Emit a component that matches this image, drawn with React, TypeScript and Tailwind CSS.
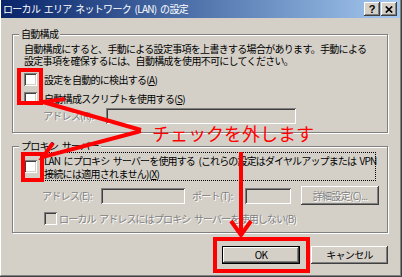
import React from "react";

const raised =
  "shadow-[inset_-1px_-1px_0_#404040,inset_1px_1px_0_#ffffff,inset_-2px_-2px_0_#808080]";
const sunken =
  "shadow-[inset_1px_1px_0_#808080,inset_-1px_-1px_0_#ffffff,inset_2px_2px_0_#404040,inset_-2px_-2px_0_#d4d0c8]";
const dis = "text-[#808080] [text-shadow:1px_1px_0_#ffffff]";

function Check({ disabled = false }: { disabled?: boolean }) {
  return (
    <div
      className={`h-[13px] w-[13px] shrink-0 ${sunken} ${disabled ? "bg-[#d4d0c8]" : "bg-white"}`}
    />
  );
}

function Group({
  label,
  className,
  children,
}: {
  label: string;
  className: string;
  children: React.ReactNode;
}) {
  return (
    <div
      className={`relative flex flex-col border border-[#808080] shadow-[inset_1px_1px_0_#ffffff,1px_1px_0_#ffffff] ${className}`}
    >
      <span className="absolute left-[6px] top-[-7px] bg-[#d4d0c8] px-[2px] leading-[12px] whitespace-nowrap">
        {label}
      </span>
      {children}
    </div>
  );
}

function TitleBtn({ children }: { children: React.ReactNode }) {
  return (
    <div
      className={`flex h-[14px] w-[16px] items-center justify-center bg-[#d4d0c8] ${raised}`}
    >
      {children}
    </div>
  );
}

export default function App() {
  return (
    <div className="relative h-[277px] w-[402px] overflow-hidden bg-[#d4d0c8] font-['Noto_Sans_CJK_JP',sans-serif] text-[10px] leading-[12px] tracking-[-0.7px] [word-spacing:2px] text-black">
      <div className="flex h-full flex-col border-r border-b border-r-[#404040] border-b-[#404040]">
        <div className="flex flex-1 flex-col border-l border-r border-b border-l-white border-r-[#808080] border-b-[#808080]">
          {/* Title bar */}
          <div className="flex h-[18px] shrink-0 items-center bg-linear-to-r from-[#0a246a] to-[#a6caf0] pl-[2px] pr-[3px]">
            <span className="flex-1 whitespace-nowrap text-white">
              ローカル エリア ネットワーク (LAN) の設定
            </span>
            <div className="flex gap-[1px]">
              <TitleBtn>
                <span className="font-['Liberation_Sans',sans-serif] text-[11px] font-bold leading-none tracking-normal">
                  ?
                </span>
              </TitleBtn>
              <TitleBtn>
                <svg width="8" height="7" viewBox="0 0 8 7">
                  <path d="M0.8 0.5 L7.2 6.5 M7.2 0.5 L0.8 6.5" stroke="#000" strokeWidth="1.7" />
                </svg>
              </TitleBtn>
            </div>
          </div>

          {/* Body */}
          <div className="flex flex-1 flex-col pl-[11px] pr-[12px]">
            <Group label="自動構成" className="mt-[16px] h-[99px] pl-[11px] pt-[8px]">
              <p className="whitespace-nowrap leading-[12px]">
                自動構成にすると、手動による設定事項を上書きする場合があります。手動による
                <br />
                設定事項を確保するには、自動構成を使用不可にしてください。
              </p>
              <div className="mt-[6px] flex h-[13px] items-center">
                <Check />
                <span className="ml-[7px] whitespace-nowrap">
                  設定を自動的に検出する(<u>A</u>)
                </span>
              </div>
              <div className="mt-[6px] flex h-[13px] items-center">
                <Check />
                <span className="ml-[7px] whitespace-nowrap">
                  自動構成スクリプトを使用する(<u>S</u>)
                </span>
              </div>
              <div className="mt-[3px] flex h-[16px] items-center">
                <span className={`ml-[19px] w-[63px] whitespace-nowrap ${dis}`}>
                  アドレス(R):
                </span>
                <div className={`h-[16px] w-[190px] bg-[#d4d0c8] ${sunken}`} />
              </div>
            </Group>

            <Group label="プロキシ サーバー" className="mt-[13px] h-[87px] pl-[11px] pt-[5px]">
              <div className="flex items-center">
                <Check />
                <div className="ml-[5px] flex h-[29px] w-[334px] flex-col justify-center border border-dotted border-black pl-[1px] leading-[13px]">
                  <span className="whitespace-nowrap tracking-[-0.85px]">
                    LAN にプロキシ サーバーを使用する (これらの設定はダイヤルアップまたは VPN
                  </span>
                  <span className="whitespace-nowrap">
                    接続には適用されません)(<u>X</u>)
                  </span>
                </div>
              </div>
              <div className="mt-[5px] flex h-[19px] items-center">
                <span className={`ml-[18px] w-[59px] whitespace-nowrap ${dis}`}>
                  アドレス(E):
                </span>
                <div className={`h-[16px] w-[84px] bg-[#d4d0c8] ${sunken}`} />
                <span className={`ml-[7px] w-[53px] whitespace-nowrap ${dis}`}>
                  ポート(T):
                </span>
                <div className={`h-[16px] w-[46px] bg-[#d4d0c8] ${sunken}`} />
                <div
                  className={`ml-[10px] flex h-[19px] w-[78px] items-center justify-center whitespace-nowrap ${raised} ${dis}`}
                >
                  詳細設定(C)...
                </div>
              </div>
              <div className="mt-[7px] flex h-[13px] items-center">
                <div className="ml-[20px]">
                  <Check disabled />
                </div>
                <span className={`ml-[2px] whitespace-nowrap tracking-[-0.85px] ${dis}`}>
                  ローカル アドレスにはプロキシ サーバーを使用しない(B)
                </span>
              </div>
            </Group>

            <div className="mt-[13px] flex justify-end gap-[11px]">
              <div className="h-[18px] w-[78px] border border-black">
                <div className={`flex h-full w-full items-center justify-center ${raised}`}>
                  OK
                </div>
              </div>
              <div className={`flex h-[18px] w-[77px] items-center justify-center ${raised}`}>
                キャンセル
              </div>
            </div>
          </div>
        </div>
      </div>

      {/* Red annotations */}
      <svg
        className="pointer-events-none absolute left-0 top-0"
        width="402"
        height="277"
        viewBox="0 0 402 277"
      >
        <g fill="none" stroke="#ff0000" strokeWidth="4">
          <rect x="19" y="70" width="22" height="33" />
          <rect x="23" y="154" width="19" height="26" />
          <rect x="215" y="239" width="93" height="32" />
          <polyline points="65,99 43,102 141,130" strokeLinejoin="miter" />
          <polyline points="53,143 43,157 141,131" strokeLinejoin="miter" />
          <line x1="241" y1="152" x2="241" y2="234" />
          <polyline points="231,221 241,235 251,221" strokeLinejoin="miter" />
        </g>
      </svg>
      <span className="absolute left-[152px] top-[123px] whitespace-nowrap text-[18px] leading-[20px] tracking-normal [word-spacing:0px] text-[#ff0000]">
        チェックを外します
      </span>
    </div>
  );
}
